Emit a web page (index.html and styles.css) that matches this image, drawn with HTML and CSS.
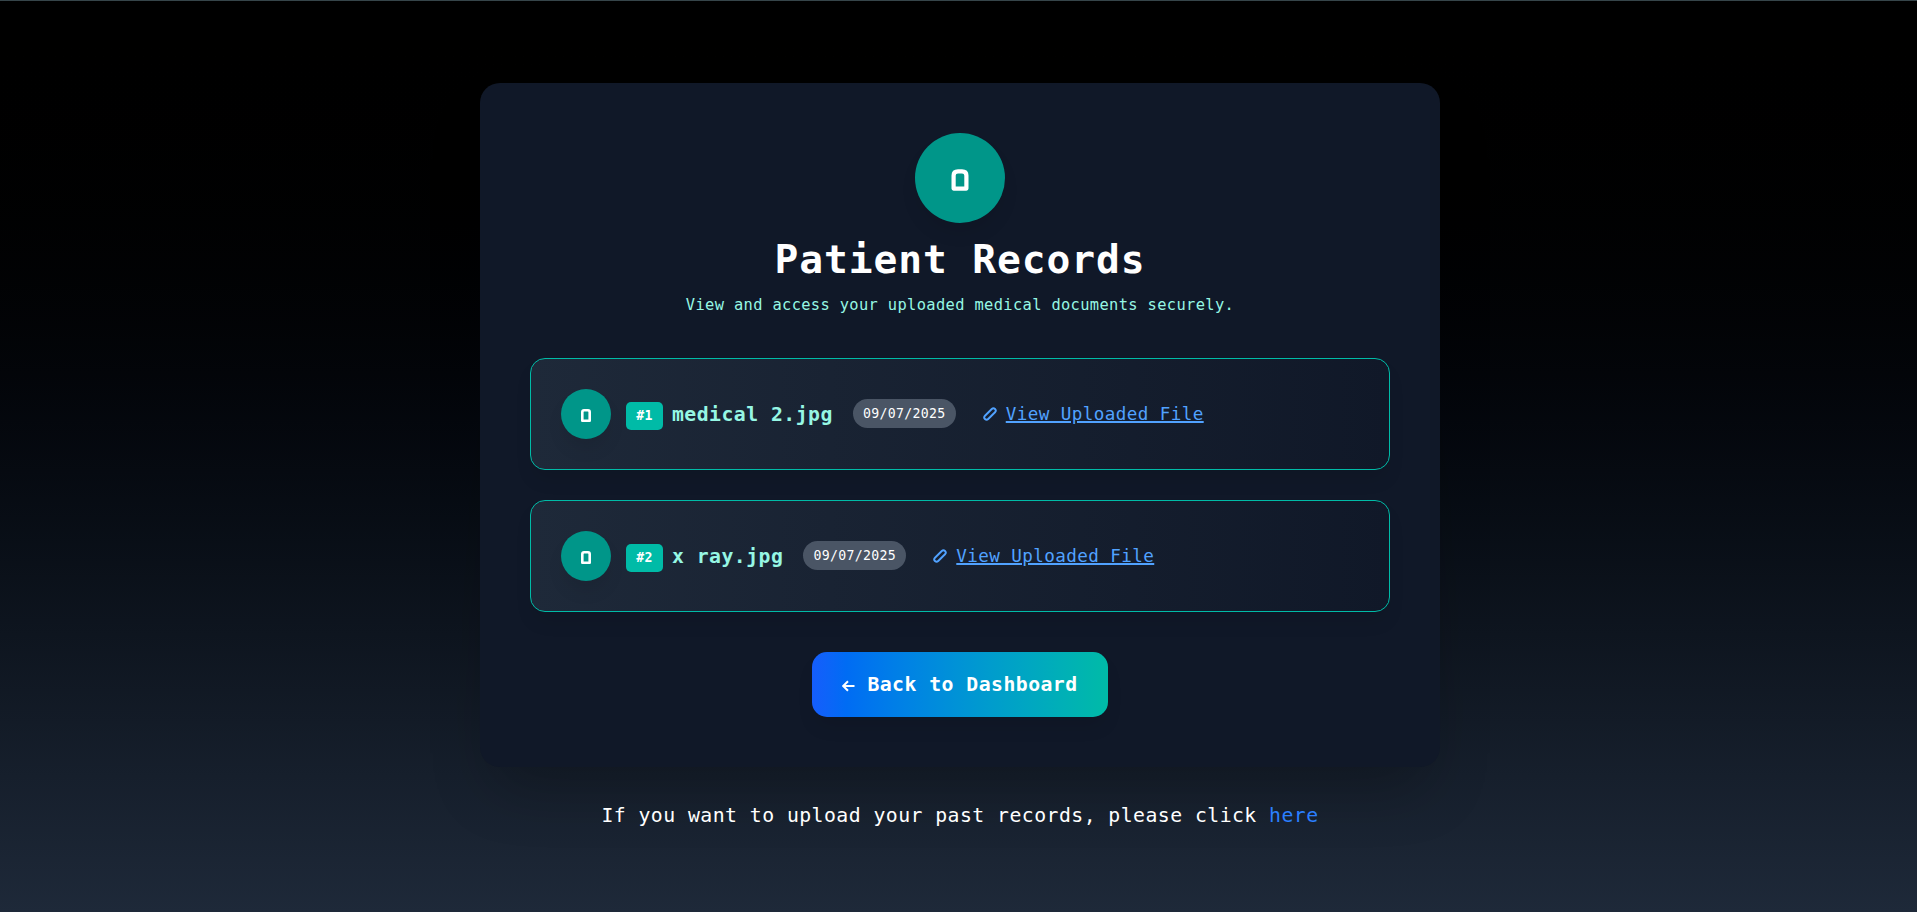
FILE: index.html
```html
<!DOCTYPE html>
<html lang="en">
<head>
<meta charset="utf-8">
<title>Patient Records</title>
<link rel="stylesheet" href="styles.css">
</head>
<body>
<main class="page">
  <section class="card">
    <div class="hero-icon"><svg width="18" height="22" viewBox="0 0 18 22"><path d="M2.6 19.6V6.5Q2.6 2.3 7 2.3H11Q15.4 2.3 15.4 6.5V19.6Z"/></svg></div>
    <h1 class="title">Patient Records</h1>
    <p class="subtitle">View and access your uploaded medical documents securely.</p>
    <ul class="records">
      <li class="record">
        <span class="record-icon"><svg width="10" height="13" viewBox="0 0 10 13"><path d="M1.3 11.7V3Q1.3 1.3 3 1.3H7Q8.7 1.3 8.7 3V11.7Z"/></svg></span>
        <span class="badge">#1</span>
        <span class="name">medical 2.jpg</span>
        <span class="date">09/07/2025</span>
        <svg class="link-icon" width="14" height="14" viewBox="0 0 14 14"><rect x="-0.1" y="4.7" width="14.2" height="4.6" rx="2.3" transform="rotate(-45 7 7)"/></svg>
        <a class="file" href="#">View Uploaded File</a>
      </li>
      <li class="record">
        <span class="record-icon"><svg width="10" height="13" viewBox="0 0 10 13"><path d="M1.3 11.7V3Q1.3 1.3 3 1.3H7Q8.7 1.3 8.7 3V11.7Z"/></svg></span>
        <span class="badge">#2</span>
        <span class="name">x ray.jpg</span>
        <span class="date">09/07/2025</span>
        <svg class="link-icon" width="14" height="14" viewBox="0 0 14 14"><rect x="-0.1" y="4.7" width="14.2" height="4.6" rx="2.3" transform="rotate(-45 7 7)"/></svg>
        <a class="file" href="#">View Uploaded File</a>
      </li>
    </ul>
    <a class="back" href="#"><svg class="arrow" width="13" height="12" viewBox="0 0 13 12"><path d="M12.5 6H1.5M6 1.2L1.2 6L6 10.8"/></svg>Back to Dashboard</a>
  </section>
  <p class="footer">If you want to upload your past records, please click <a class="here" href="#">here</a></p>
</main>
</body>
</html>
```
FILE: styles.css
```css
* { box-sizing: border-box; margin: 0; padding: 0; letter-spacing: 0.023em; }
body {
  font-family: "DejaVu Sans Mono", monospace;
  color: #fff;
  background: #1e2939;
}
.page {
  height: 912px;
  padding-top: 82px;
  border-top: 1px solid #36454a;
  background: linear-gradient(to bottom in oklab, #000, #1e2939);
  display: flex;
  flex-direction: column;
  align-items: center;
  overflow: hidden;
}
.card {
  width: 960px;
  height: 684px;
  padding: 50px;
  margin-left: 3px;
  border-radius: 20px;
  background: #101828;
  box-shadow: 0 31px 62px -15px rgba(0, 0, 0, 0.25);
  display: flex;
  flex-direction: column;
  align-items: center;
}
.hero-icon, .record-icon {
  display: flex;
  flex: none;
  align-items: center;
  justify-content: center;
  border-radius: 50%;
  background: #009689;
  box-shadow: 0 12px 19px -4px rgba(0, 0, 0, 0.1);
}
.hero-icon { width: 90px; height: 90px; padding-top: 4px; }
.record-icon { width: 50px; height: 50px; margin-right: 15px; padding-top: 3px; }
.hero-icon path { fill: none; stroke: #fff; stroke-width: 4.2; stroke-linejoin: round; }
.record-icon path { fill: none; stroke: #fff; stroke-width: 2.6; stroke-linejoin: round; }
.title { margin-top: 11px; font-size: 39.6px; line-height: 50px; }
.subtitle { margin-top: 9px; font-size: 15.4px; line-height: 25px; color: #96f7e4; }
.records {
  width: 860px;
  margin-top: 40px;
  display: flex;
  flex-direction: column;
  gap: 30px;
  list-style: none;
}
.record {
  height: 112px;
  padding: 0 30px;
  border: 1px solid #00bba7;
  border-radius: 15px;
  background: linear-gradient(to right in oklab, #1e2939, #101828);
  box-shadow: 0 12px 19px -4px rgba(0, 0, 0, 0.1);
  display: flex;
  align-items: center;
  white-space: nowrap;
}
.badge {
  width: 37px;
  height: 28px;
  margin: 4px 9px 0 0;
  border-radius: 5px;
  background: #00bba7;
  font-size: 13.2px;
  font-weight: bold;
  line-height: 28px;
  text-align: center;
}
.name { margin-right: 20px; font-size: 19.8px; font-weight: bold; color: #96f7e4; }
.date {
  width: 103px;
  height: 29px;
  margin: 0 27px 1px 0;
  border-radius: 15px;
  background: #4a5565;
  font-size: 13.2px;
  line-height: 29px;
  text-align: center;
}
.link-icon { margin-right: 9px; }
.link-icon rect { fill: none; stroke: #51a2ff; stroke-width: 1.9; }
.file {
  font-size: 17.6px;
  color: #51a2ff;
  text-decoration-thickness: 2px;
  text-underline-offset: 1px;
}
.back {
  width: 296px;
  height: 65px;
  margin-top: 40px;
  border-radius: 15px;
  background: linear-gradient(to right in oklab, #155dfc, #00bba7);
  box-shadow: 0 12px 19px -4px rgba(0, 0, 0, 0.1);
  display: flex;
  align-items: center;
  justify-content: center;
  font-size: 19.8px;
  font-weight: bold;
  color: #fff;
  text-decoration: none;
  white-space: nowrap;
}
.arrow { margin: 2px 12px 0 0; }
.arrow path { fill: none; stroke: #fff; stroke-width: 2; }
.footer { margin: 35px 0 0 3px; font-size: 19.8px; line-height: 28px; }
.here { color: #2b7fff; text-decoration: none; }
```
